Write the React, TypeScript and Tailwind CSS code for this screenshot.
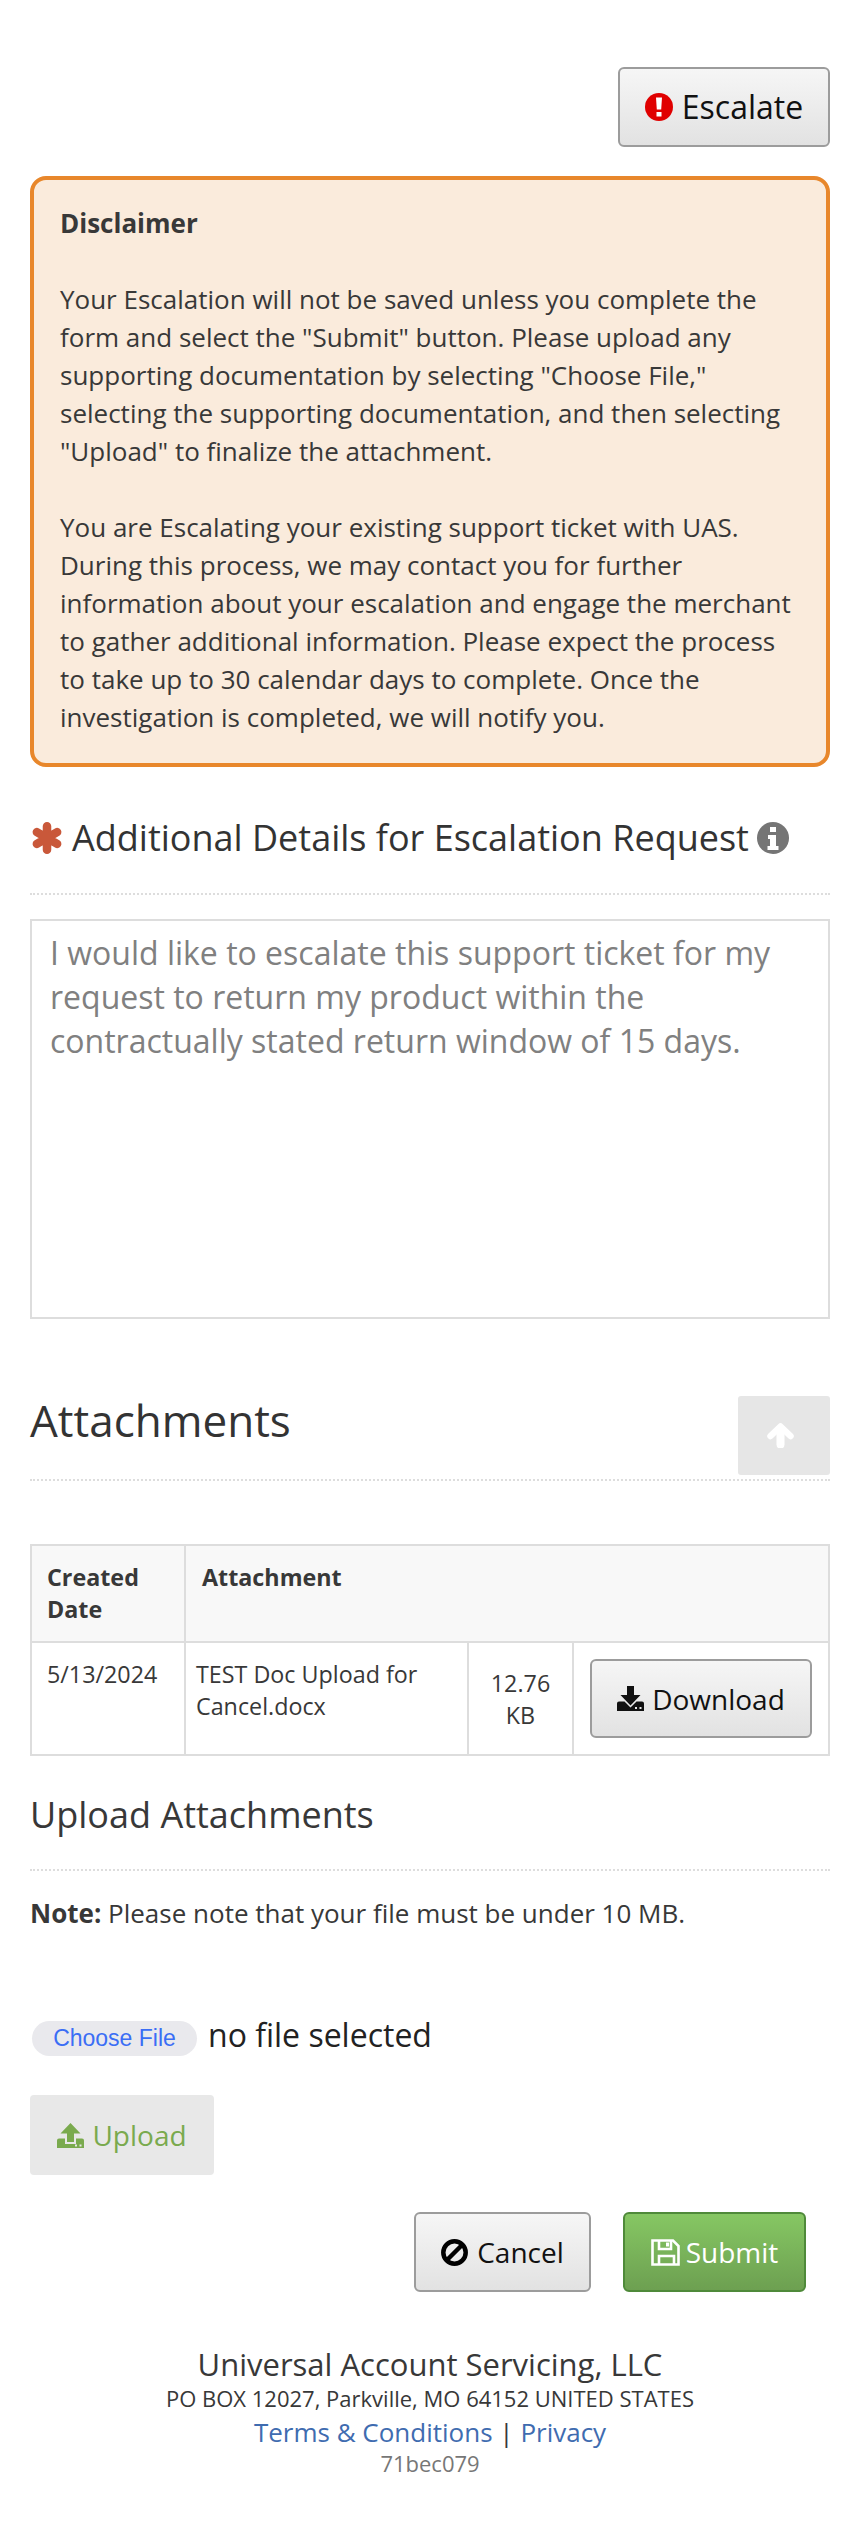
const grayButton = "flex items-center justify-center rounded-[6px] border-2 border-[#9c9c9c] bg-gradient-to-b from-[#f6f6f6] to-[#e2e2e2] text-[#111]";

const AsteriskIcon = () => (
    <svg viewBox="0 0 30 30" className="w-[32px] h-[32px] text-[#c9583a]" stroke="currentColor" strokeWidth="8" strokeLinecap="round">
        <path d="M15 4V26M5.500 9.500L24.500 20.500M24.500 9.500L5.500 20.500" />
    </svg>
);

const InfoIcon = () => (
    <svg viewBox="0 0 32 32" className="w-[32px] h-[32px]">
        <circle cx="16" cy="16" r="16" fill="#757575" />
        <path d="M13 5h6v5h-6zM11 13h8v11h2.500v4h-11v-4H13v-7h-2z" fill="#fff" />
    </svg>
);

const AlertIcon = () => (
    <svg viewBox="0 0 28 28" className="w-[28px] h-[28px]">
        <circle cx="14" cy="14" r="14" fill="#e00000" />
        <path d="M11 4.500h6l-.8 12h-4.400zM11.500 19h5v4.500h-5z" fill="#fff" />
    </svg>
);

const DownloadIcon = () => (
    <svg viewBox="0 0 27 25" className="w-[27px] h-[25px]" fill="currentColor">
        <path d="M10 0h7v9h6.500L13.500 19.500 3.500 9H10z" />
        <path fillRule="evenodd" d="M2 15.500h5.500l6 6 6-6H25a2 2 0 0 1 2 2V25H0v-7.500a2 2 0 0 1 2-2zM18 21v2h2v-2zM22.500 21v2h2v-2z" />
    </svg>
);

const UploadIcon = () => (
    <svg viewBox="0 0 27 25" className="w-[27px] h-[25px]" fill="currentColor">
        <path d="M13.500 0L23.500 10.500H17V19h-7v-8.500H3.500z" />
        <path fillRule="evenodd" d="M2 15.500h6V21h11v-5.500h6a2 2 0 0 1 2 2V25H0v-7.500a2 2 0 0 1 2-2zM18 21.500v2h2v-2zM22.500 21.500v2h2v-2z" />
    </svg>
);

const BanIcon = () => (
    <svg viewBox="0 0 27 27" className="w-[27px] h-[27px]" fill="none" stroke="#000" strokeWidth="4.500">
        <circle cx="13.500" cy="13.500" r="11.200" />
        <path d="M6 21L21 6" />
    </svg>
);

const SaveIcon = () => (
    <svg viewBox="0 0 29 27" className="w-[29px] h-[27px]" fill="none" stroke="#fff" strokeWidth="2.600">
        <path d="M1.500 1.500H22L27.500 7V25.500H1.500z" />
        <path d="M8 1.500V10H20V1.500M8 25.500V17H23V25.500" />
        <path d="M15 3.500h3v4h-3z" fill="#fff" stroke="none" />
    </svg>
);

const ArrowUpIcon = () => (
    <svg viewBox="0 0 27 25" className="w-[27px] h-[25px] -translate-x-[4px]" fill="none" stroke="#fff" strokeLinecap="round" strokeLinejoin="round">
        <path d="M13.500 21.500V6" strokeWidth="8" />
        <path d="M3.500 13L13.500 3.500 23.500 13" strokeWidth="6.500" />
    </svg>
);

export default function App() {
    return (
        <div className="w-[860px] h-[2526px] overflow-hidden bg-white px-[30px] pt-[67px] font-['Open_Sans',sans-serif] text-[#383838]">
            <div className="flex justify-end">
                <button className={`${grayButton} w-[212px] h-[80px] gap-[9px] text-[32px]`}>
                    <AlertIcon />
                    Escalate
                </button>
            </div>

            <div className="mt-[29px] h-[591px] rounded-[16px] border-[4px] border-[#e8872b] bg-[#faebdc] pl-[26px] pt-[24px] text-[26px] leading-[38px]">
                <p className="font-bold">Disclaimer</p>
                <p className="mt-[38px]">
                    Your Escalation will not be saved unless you complete the<br />
                    form and select the "Submit" button. Please upload any<br />
                    supporting documentation by selecting "Choose File,"<br />
                    selecting the supporting documentation, and then selecting<br />
                    "Upload" to finalize the attachment.
                </p>
                <p className="mt-[38px]">
                    You are Escalating your existing support ticket with UAS.<br />
                    During this process, we may contact you for further<br />
                    information about your escalation and engage the merchant<br />
                    to gather additional information. Please expect the process<br />
                    to take up to 30 calendar days to complete. Once the<br />
                    investigation is completed, we will notify you.
                </p>
            </div>

            <div className="mt-[44px] flex h-[53px] items-center pl-[1px] text-[36px] leading-[44px] text-[#333]">
                <AsteriskIcon />
                <span className="ml-[9px] mr-[8px]">Additional Details for Escalation Request</span>
                <InfoIcon />
            </div>
            <div className="mt-[29px] border-t-2 border-dotted border-[#ddd]" />

            <div className="mt-[24px] h-[400px] border-2 border-[#ddd] px-[18px] pt-[10px] text-[32px] leading-[44px] text-[#808080]">
                I would like to escalate this support ticket for my<br />
                request to return my product within the<br />
                contractually stated return window of 15 days.
            </div>

            <div className="mt-[77px] flex h-[79px] justify-between">
                <h2 className="text-[44px] leading-[48px] text-[#333]">Attachments</h2>
                <button className="flex w-[92px] h-[79px] items-center justify-center rounded-[3px] bg-[#e6e6e6]">
                    <ArrowUpIcon />
                </button>
            </div>
            <div className="mt-[4px] border-t-2 border-dotted border-[#ddd]" />

            <table className="mt-[63px] w-[800px] table-fixed border-collapse border-2 border-[#ddd] text-[23.3px] leading-[32px]">
                <colgroup>
                    <col className="w-[154px]" />
                    <col className="w-[283px]" />
                    <col className="w-[105px]" />
                    <col />
                </colgroup>
                <thead>
                    <tr className="h-[97px] bg-[#f8f8f8]">
                        <th className="border-2 border-[#ddd] pl-[15px] pt-[15px] pr-[10px] text-left align-top font-bold">Created Date</th>
                        <th colSpan={3} className="border-2 border-[#ddd] pl-[16px] pt-[15px] text-left align-top font-bold">Attachment</th>
                    </tr>
                </thead>
                <tbody>
                    <tr className="h-[113px]">
                        <td className="border-2 border-[#ddd] pl-[15px] pt-[15px] align-top">5/13/2024</td>
                        <td className="border-2 border-[#ddd] pl-[10px] pt-[15px] align-top">TEST Doc Upload for Cancel.docx</td>
                        <td className="border-2 border-[#ddd] px-[16px] text-center align-middle">12.76 KB</td>
                        <td className="border-2 border-[#ddd] pl-[16px] align-middle">
                            <button className={`${grayButton} w-[222px] h-[79px] gap-[8px] text-[28px]`}>
                                <DownloadIcon />
                                Download
                            </button>
                        </td>
                    </tr>
                </tbody>
            </table>

            <h3 className="mt-[35px] text-[36px] leading-[48px]">Upload Attachments</h3>
            <div className="mt-[30px] border-t-2 border-dotted border-[#ddd]" />
            <p className="mt-[27px] text-[26px] leading-[30px]">
                <b>Note:</b> Please note that your file must be under 10 MB.
            </p>

            <div className="mt-[88px] flex items-start gap-[11px]">
                <button className="ml-[2px] mt-[5px] h-[35px] w-[165px] rounded-full bg-[#e9e9ed] font-['Liberation_Sans',sans-serif] text-[23px] leading-[35px] text-[#3b6ef5]">
                    Choose File
                </button>
                <span className="text-[32px] leading-[38px] text-[#222]">no file selected</span>
            </div>

            <button className="mt-[39px] flex h-[80px] w-[184px] items-center justify-center gap-[8px] rounded-[4px] bg-[#e8e8e8] text-[28px] text-[#7aaa4e]">
                <UploadIcon />
                Upload
            </button>

            <div className="mt-[37px] flex justify-end gap-[32px] pr-[24px]">
                <button className={`${grayButton} w-[177px] h-[80px] gap-[9px] text-[28px]`}>
                    <BanIcon />
                    Cancel
                </button>
                <button className="flex h-[80px] w-[183px] items-center justify-center gap-[6px] rounded-[6px] border-2 border-[#4f8a3a] bg-gradient-to-b from-[#86c763] to-[#6da051] text-[28px] text-white">
                    <SaveIcon />
                    Submit
                </button>
            </div>

            <div className="mt-[52px] text-center">
                <div className="text-[31px] leading-[40px]">Universal Account Servicing, LLC</div>
                <div className="text-[22px] leading-[28px]">PO BOX 12027, Parkville, MO 64152 UNITED STATES</div>
                <div className="mt-[3px] text-[26px] leading-[34px]">
                    <a className="text-[#3f6cb0]">Terms &amp; Conditions</a> | <a className="text-[#3f6cb0]">Privacy</a>
                </div>
                <div className="text-[22px] leading-[28px] text-[#777]">71bec079</div>
            </div>
        </div>
    );
}
